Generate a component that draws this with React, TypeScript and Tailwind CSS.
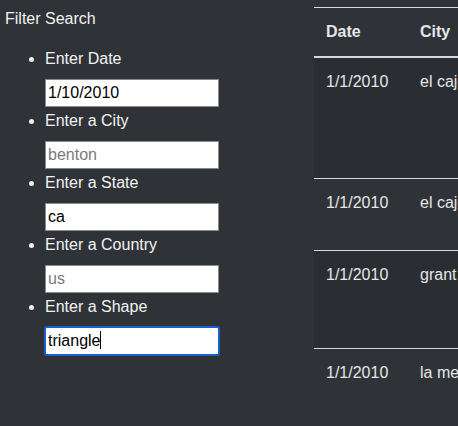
import React from "react";

const font = { fontFamily: '"Liberation Sans", Arial, Helvetica, sans-serif' };

type Field = { label: string; value?: string; placeholder?: string; focused?: boolean };

const fields: Field[] = [
  { label: "Enter Date", value: "1/10/2010" },
  { label: "Enter a City", placeholder: "benton" },
  { label: "Enter a State", value: "ca" },
  { label: "Enter a Country", placeholder: "us" },
  { label: "Enter a Shape", value: "triangle", focused: true },
];

const rows = [
  { date: "1/1/2010", city: "el cajon", h: "h-[121px]", striped: true },
  { date: "1/1/2010", city: "el cajon", h: "h-[72px]", striped: false },
  { date: "1/1/2010", city: "grant", h: "h-[98px]", striped: true },
  { date: "1/1/2010", city: "la mesa", h: "h-[98px]", striped: false },
];

export default function App() {
  return (
    <div
      className="w-[458px] h-[426px] overflow-hidden bg-[#2f3337] text-[#f2f2f2] flex text-[16px]"
      style={font}
    >
      <div className="w-[314px] shrink-0">
        <div className="pl-[5px] pt-[8px] h-[47px] leading-[22px]">Filter Search</div>
        <ul className="pl-[45px] list-disc marker:text-[#f2f2f2]">
          {fields.map((f) => (
            <li key={f.label} className="leading-[24px]">
              <div className="h-[24px] mb-[8px]">{f.label}</div>
              <div
                className={
                  f.focused
                    ? "w-[176px] h-[30px] -ml-[1px] mb-[1px] -mt-[1px] rounded-[3px] border-2 border-[#1a5fd0] bg-white flex items-center px-[2px] text-black"
                    : "w-[174px] h-[28px] mb-[2px] border border-[#8a8a8a] bg-white flex items-center px-[2px] text-black"
                }
              >
                {f.value ? (
                  <span className="text-black">
                    {f.value}
                    {f.focused && <span className="inline-block w-[1px] h-[18px] bg-black align-[-3px]" />}
                  </span>
                ) : (
                  <span className="text-[#7a7a7a]">{f.placeholder}</span>
                )}
              </div>
            </li>
          ))}
        </ul>
      </div>
      <div className="flex-1 pt-[7px] min-w-0">
        <div className="w-[400px] text-[#e4e6e8]">
          <div className="flex h-[51px] border-t border-b-2 border-t-[#d6d8da] border-b-[#d6d8da] font-bold leading-[24px] pt-[12px]">
            <div className="w-[94px] pl-[12px]">Date</div>
            <div className="pl-[12px]">City</div>
          </div>
          {rows.map((r, i) => (
            <div
              key={i}
              className={`flex ${r.h} border-b border-[#d6d8da] leading-[24px] pt-[12px] ${r.striped ? "bg-[#2a2e32]" : ""}`}
            >
              <div className="w-[94px] pl-[12px]">{r.date}</div>
              <div className="pl-[12px] whitespace-nowrap">{r.city}</div>
            </div>
          ))}
        </div>
      </div>
    </div>
  );
}
